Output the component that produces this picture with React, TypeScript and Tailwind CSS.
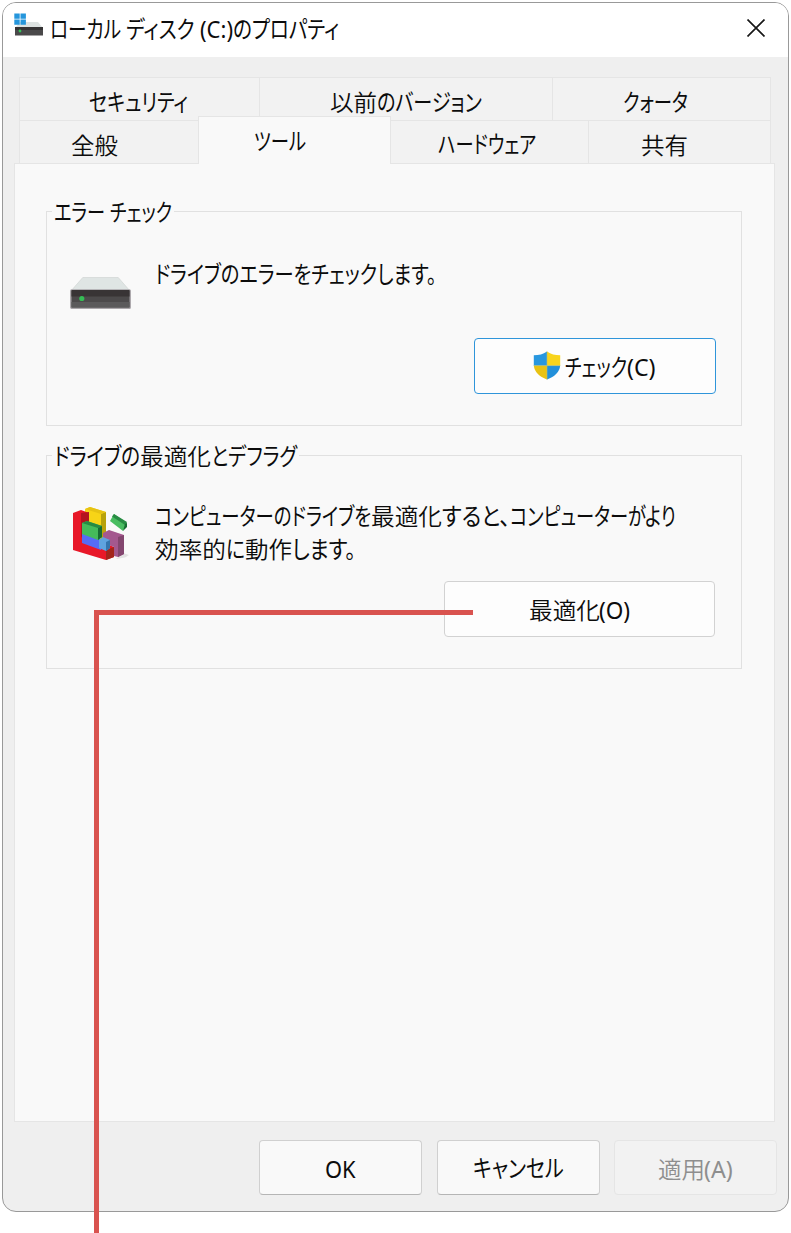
import { useLayoutEffect, useRef, useState } from 'react';
import type { ReactNode } from 'react';
import { clsx } from 'clsx';

type Run = [text: string, width: number];

// One stretch of text, condensed or widened to the given width
function FitRun({ text, width }: { text: string; width: number }) {
  const ref = useRef<HTMLSpanElement>(null);
  const [scale, setScale] = useState(1);
  const isKanji = /^[\u4e00-\u9fff]+$/.test(text);

  useLayoutEffect(() => {
    if (ref.current) setScale(width / ref.current.offsetWidth);
  }, [text, width]);

  return (
    <span className="inline-block" style={{ width }}>
      <span
        ref={ref}
        className={clsx('inline-block origin-left whitespace-pre', isKanji && 'text-[23px] font-[350]')}
        style={{ transform: `scaleX(${scale})` }}
      >
        {text}
      </span>
    </span>
  );
}

function Label({ runs, className }: { runs: Run[]; className?: string }) {
  return (
    <span className={clsx('flex h-8 shrink-0 items-center leading-8', className)}>
      {runs.map(([text, width], i) => (
        <FitRun key={i} text={text} width={width} />
      ))}
    </span>
  );
}

function DriveIcon() {
  return (
    <svg className="h-8 w-[61px]" viewBox="0 0 62 32" preserveAspectRatio="none">
      <path d="M13 0.5H49L61 14H1Z" fill="#dfe5e4" stroke="#d4d8d7" strokeWidth="0.8" />
      <rect x="0.8" y="13" width="60.4" height="18.2" rx="0.8" fill="#4c4a4b" stroke="#aaa6aa" strokeWidth="1.4" />
      <rect x="1.5" y="13" width="59" height="6.5" fill="#383435" />
      <rect x="1.5" y="25" width="59" height="5.5" fill="#5b5a5b" />
      <circle cx="12" cy="21.5" r="2.6" fill="#35bd55" />
    </svg>
  );
}

function SystemDriveIcon() {
  return (
    <svg className="h-6 w-[30px]" viewBox="0 0 30 24">
      <path d="M6 9H24L29 15H1Z" fill="#dde2e1" />
      <rect x="1" y="14.5" width="28" height="8" fill="#4a494a" />
      <rect x="1" y="14" width="28" height="3" fill="#363435" />
      <circle cx="6" cy="18" r="1.4" fill="#35c458" />
      <path d="M0.3 0.5H5.7V5.7H0.3ZM6.5 0.5H11.9V5.7H6.5ZM0.3 6.5H5.7V11.7H0.3ZM6.5 6.5H11.9V11.7H6.5Z" fill="#2596dc" />
    </svg>
  );
}

function ShieldIcon() {
  return (
    <svg className="h-[29px] w-7" viewBox="0 0 28 29">
      <path d="M14 0.5C10 3.5 6 4.2 0.8 4.2V14.8H14Z" fill="#2897df" />
      <path d="M14 0.5C18 3.5 22 4.2 27.2 4.2V14.8H14Z" fill="#f8d41c" />
      <path d="M0.8 14.8C1.5 21 6 25.5 14 28.5V14.8Z" fill="#e8c214" />
      <path d="M27.2 14.8C26.5 21 22 25.5 14 28.5V14.8Z" fill="#2290da" />
      <path d="M14 0.5V28.5M0.8 14.6H27.2" stroke="#b9bd72" strokeWidth="0.6" />
    </svg>
  );
}

function DefragIcon() {
  return (
    <svg className="h-[56px] w-[58px]" viewBox="0 0 58 56">
      <path d="M44 53L53 51.5L57 49L51 47Z" fill="#e2e2e2" />
      <path d="M13 3L18 1L34 6V33L28 35L13 18Z" fill="#f7d417" />
      <path d="M29 8L34 6V34L29 35Z" fill="#b8a20c" />
      <path d="M13 3L18 1L34 6L29 8Z" fill="#e6c313" />
      <path d="M1 7L9 4L17 7V30L42 41V51L34 54L1 44Z" fill="#e81828" />
      <path d="M9 7L17 6V16L10 18V32L9 30Z" fill="#b5121f" />
      <path d="M34 44L42 41V51L34 54Z" fill="#a3251b" />
      <path d="M31 27L37 24L52 29V48L46 51L42 50V41L31 37Z" fill="#a4588f" />
      <path d="M46 31L52 29V48L46 51Z" fill="#83466f" />
      <path d="M10 27L29 33V44L10 37Z" fill="#566cf5" />
      <path d="M10 17L15 15L30 20V31L26 34L10 28Z" fill="#45bb5b" />
      <path d="M10 17L15 15L30 20L26 22Z" fill="#278a43" />
      <path d="M26 22L30 20V31L26 34Z" fill="#176c32" />
      <path d="M27 34L31 31L38 34V42L34 45L27 42Z" fill="#5fa3df" />
      <path d="M34 36L38 34V42L34 45Z" fill="#3474ad" />
      <path d="M42 8L55 17L51 25L38 15Z" fill="#49bd61" />
      <path d="M42 8L55 16L53 19L40 10.5Z" fill="#288c44" />
      <path d="M53 18L55 17V21L51 25Z" fill="#176c32" />
    </svg>
  );
}

interface TabProps {
  runs: Run[];
  className: string;
}

function Tab({ runs, className }: TabProps) {
  return (
    <div className={clsx('box-border flex shrink-0 border-l border-t border-[#e5e5e5] bg-[#f2f2f2]', className)}>
      <Label runs={runs} />
    </div>
  );
}

interface GroupProps {
  title: Run[];
  className: string;
  children: ReactNode;
}

function Group({ title, className, children }: GroupProps) {
  return (
    <fieldset className={clsx('flex w-[696px] flex-col border border-[#e1e1e1]', className)}>
      <legend className="ml-[5px] h-8 pl-0.5 pr-0.5">
        <Label className="pt-px" runs={title} />
      </legend>
      {children}
    </fieldset>
  );
}

export default function App() {
  return (
    <div className="relative h-[1233px] w-[791px] overflow-hidden bg-white pl-0.5 pt-0.5 font-['Noto_Sans','Noto_Sans_CJK_JP',sans-serif] text-2xl text-[#0c0c0c] [font-feature-settings:'palt']">
      <div className="flex h-[1210px] w-[787px] flex-col overflow-hidden rounded-[14px] border border-[#999] bg-[#efefef]">
        {/* Title bar */}
        <header className="flex h-[54px] shrink-0 items-start bg-white pl-[11px]">
          <div className="mt-[10px]">
            <SystemDriveIcon />
          </div>
          <Label
            className="ml-[6px] mt-[10px]"
            runs={[['ローカル ', 76], ['ディスク ', 74], ['(C:)', 33], ['のプロパティ', 106]]}
          />
          <button className="ml-auto mr-[23px] mt-4" aria-label="閉じる">
            <svg className="h-[18px] w-[18px]" viewBox="0 0 18 18">
              <path d="M0.5 0.5L17.5 17.5M17.5 0.5L0.5 17.5" stroke="#181818" strokeWidth="1.7" />
            </svg>
          </button>
        </header>

        {/* Tabs */}
        <nav className="mt-5 flex shrink-0 flex-col pl-4">
          <div className="flex h-[43px]">
            <Tab className="w-[240px] pl-[69px] pt-2" runs={[['セキュリティ', 99]]} />
            <Tab className="w-[293px] pl-[70px] pt-2" runs={[['以前', 47], ['のバージョン', 105]]} />
            <Tab className="w-[219px] border-r pl-[70px] pt-2" runs={[['クォータ', 65]]} />
          </div>
          <div className="flex h-[43px] items-end">
            <Tab className="h-[43px] w-[179px] pl-[51px] pt-2" runs={[['全般', 47]]} />
            <Tab
              className="relative z-10 -mb-px h-12 w-[193px] border-r bg-[#f9f9f9] pl-[55px] pt-2"
              runs={[['ツール', 52]]}
            />
            <Tab className="h-[43px] w-[197px] border-l-0 pl-[47px] pt-[7px]" runs={[['ハードウェア', 98]]} />
            <Tab className="h-[43px] w-[183px] border-r pl-[52px] pt-2" runs={[['共有', 47]]} />
          </div>
        </nav>

        {/* Tab page */}
        <main className="ml-[11px] h-[959px] w-[761px] shrink-0 border border-[#e5e5e5] bg-[#f9f9f9] pl-[31px] pt-[31px]">
          <Group className="h-[231px]" title={[['エラー ', 56], ['チェック', 62]]}>
            <div className="flex h-[111px] items-start pl-[23px]">
              <div className="mt-[50px]">
                <DriveIcon />
              </div>
              <Label className="ml-[24px] mt-[31px]" runs={[['ドライブのエラーをチェックします。', 281]]} />
            </div>
            <button className="ml-[427px] flex h-14 w-[242px] items-center rounded-[4px] border border-[#2f95da] bg-[#fdfdfd] pl-[58px]">
              <div className="-mt-0.5">
                <ShieldIcon />
              </div>
              <Label className="ml-1 mt-0.5" runs={[['チェック', 62], ['(C)', 29]]} />
            </button>
          </Group>

          <Group
            className="mt-[13px] h-[230px]"
            title={[['ドライブの', 86], ['最適化', 71], ['とデフラグ', 86]]}
          >
            <div className="flex h-[110px] items-start pl-[25px]">
              <div className="mt-[35px]">
                <DefragIcon />
              </div>
              <div className="ml-[25px] mt-[29px]">
                <Label
                  runs={[['コンピューターのドライブを', 216], ['最適化', 71], ['すると、', 68], ['コンピューターがより', 166]]}
                />
                <Label className="mt-px" runs={[['効率的', 71], ['に', 19], ['動作', 47], ['します。', 64]]} />
              </div>
            </div>
            <button className="ml-[397px] flex h-14 w-[271px] items-center rounded-[4px] border border-[#d2d2d2] bg-[#fdfdfd] pl-[83px]">
              <Label className="mt-0.5" runs={[['最適化', 71], ['(O)', 31]]} />
            </button>
          </Group>
        </main>

        {/* Dialog buttons */}
        <footer className="mt-[18px] flex shrink-0 gap-[14px] pl-[256px]">
          <button className="flex h-[55px] w-[163px] items-center rounded-[4px] border border-[#d0d0d0] border-b-[#b5b5b5] bg-[#f9f9f9] pl-[65px]">
            <Label className="mt-0.5" runs={[['OK', 31]]} />
          </button>
          <button className="ml-px flex h-[55px] w-[163px] items-center rounded-[4px] border border-[#d0d0d0] border-b-[#b5b5b5] bg-[#f9f9f9] pl-[35px]">
            <Label runs={[['キャンセル', 91]]} />
          </button>
          <button className="flex h-[55px] w-[163px] items-center rounded-[4px] border border-[#e5e5e5] bg-[#f2f2f2] pl-[42px] text-[#8e8e8e]">
            <Label className="mt-0.5" runs={[['適用', 47], ['(A)', 29]]} />
          </button>
        </footer>
      </div>

      {/* Callout line */}
      <div className="absolute left-[94px] top-[610px] h-[623px] w-[379px] border-l-[5px] border-t-[5px] border-[#d9534f]" />
    </div>
  );
}
